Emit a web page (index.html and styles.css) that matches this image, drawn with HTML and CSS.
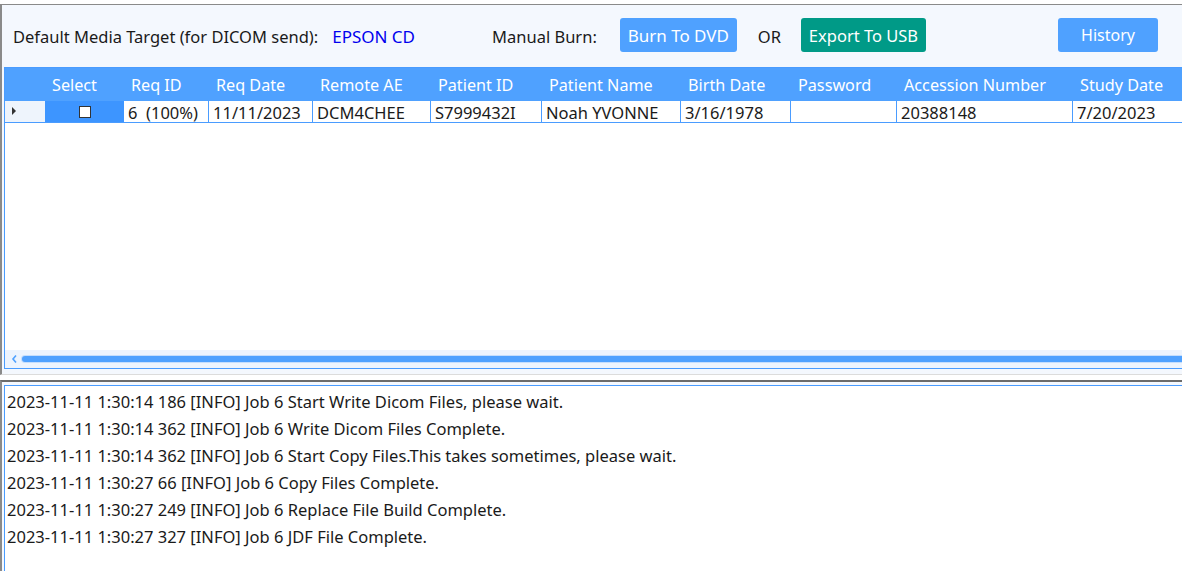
FILE: index.html
```html
<!doctype html>
<html>
<head>
	<meta charset="utf-8"/>
	<title>Media Burn</title>
	<link rel="stylesheet" href="styles.css">
</head>
<body>
	<div class="window">
		<div class="toolbar">
			<span class="label">Default Media Target (for DICOM send):</span>
			<span class="target">EPSON CD</span>
			<span class="label manual">Manual Burn:</span>
			<button class="btn" id="burn">Burn To DVD</button>
			<span class="label or">OR</span>
			<button class="btn green" id="usb">Export To USB</button>
			<button class="btn" id="history">History</button>
		</div>

		<div class="grid">
			<div class="row head">
				<div class="cell c0"></div>
				<div class="cell c1">Select</div>
				<div class="cell c2">Req ID</div>
				<div class="cell c3">Req Date</div>
				<div class="cell c4">Remote AE</div>
				<div class="cell c5">Patient ID</div>
				<div class="cell c6">Patient Name</div>
				<div class="cell c7">Birth Date</div>
				<div class="cell c8">Password</div>
				<div class="cell c9">Accession Number</div>
				<div class="cell c10">Study Date</div>
			</div>
			<div class="row data">
				<div class="cell c0"><span class="arrow"></span></div>
				<div class="cell c1"><span class="check"></span></div>
				<div class="cell c2">6&nbsp; (100%)</div>
				<div class="cell c3">11/11/2023</div>
				<div class="cell c4">DCM4CHEE</div>
				<div class="cell c5">S7999432I</div>
				<div class="cell c6">Noah YVONNE</div>
				<div class="cell c7">3/16/1978</div>
				<div class="cell c8"></div>
				<div class="cell c9">20388148</div>
				<div class="cell c10">7/20/2023</div>
			</div>
			<div class="empty"></div>
			<div class="scrollbar">
				<svg class="scroll-arrow" width="17" height="18" viewBox="0 0 17 18">
					<path d="M11 5.5 L8 9 L11 12.5" fill="none" stroke="#4fa1ff" stroke-width="1.6"/>
				</svg>
				<div class="thumb"></div>
			</div>
		</div>
	</div>

	<div class="logpanel">
		<div class="log">
			<div class="line">2023-11-11 1:30:14 186 [INFO] Job 6 Start Write Dicom Files, please wait.</div>
			<div class="line">2023-11-11 1:30:14 362 [INFO] Job 6 Write Dicom Files Complete.</div>
			<div class="line">2023-11-11 1:30:14 362 [INFO] Job 6 Start Copy Files.This takes sometimes, please wait.</div>
			<div class="line">2023-11-11 1:30:27 66 [INFO] Job 6 Copy Files Complete.</div>
			<div class="line">2023-11-11 1:30:27 249 [INFO] Job 6 Replace File Build Complete.</div>
			<div class="line">2023-11-11 1:30:27 327 [INFO] Job 6 JDF File Complete.</div>
		</div>
	</div>
</body>
</html>
```

FILE: styles.css
```css
html, body {
	margin: 0;
	padding: 0;
	background: white;
	overflow: hidden;
	font-family: "Noto Sans", "Open Sans", sans-serif;
	color: #1a1a1a;
}
.window {
	margin-top: 4px;
	border-top: 1px solid #8a8a8a;
	border-left: 2px solid #8a8a8a;
	border-bottom: 1px solid #dcdcdc;
	background: #f4f8fe;
	padding-bottom: 5px;
}
.toolbar {
	height: 62px;
	display: flex;
	align-items: center;
	padding-left: 11px;
	font-size: 16.5px;
	white-space: nowrap;
}
.target {
	color: #0000ee;
	margin-left: 14px;
	font-size: 17px;
}
.manual {
	margin-left: 77px;
}
.btn {
	font-family: inherit;
	font-size: 17px;
	height: 34px;
	border: none;
	border-radius: 3px;
	color: white;
	background-color: #4fa1ff;
	padding: 0;
	margin-top: -2px;
}
#burn {
	margin-left: 23px;
	width: 117px;
}
.or {
	margin-left: 21px;
}
#usb {
	margin-left: 20px;
	width: 125px;
	background-color: #009a87;
	font-size: 16.5px;
}
#history {
	margin-left: 132px;
	width: 100px;
	font-size: 16px;
}
.grid {
	margin-left: 2px;
	width: 1400px;
	border: 1px solid #4a9cff;
	border-right: none;
	background: white;
}
.row {
	display: flex;
	white-space: nowrap;
}
.head {
	height: 33px;
	background-color: #4fa1ff;
	color: white;
	font-size: 16.2px;
	align-items: center;
	padding-top: 1px;
	box-sizing: border-box;
}
.head .cell {
	padding-left: 7px;
}
.data {
	height: 21px;
	font-size: 16.5px;
	border-bottom: 1px solid #4a9cff;
}
.data .cell {
	padding-left: 4px;
	border-right: 1px solid #4a9cff;
	line-height: 23px;
}
.cell {
	box-sizing: border-box;
	flex: none;
}
.c0 { width: 40px; }
.c1 { width: 79px; }
.c2 { width: 85px; }
.c3 { width: 104px; }
.c4 { width: 118px; }
.c5 { width: 111px; }
.c6 { width: 139px; }
.c7 { width: 110px; }
.c8 { width: 106px; }
.c9 { width: 176px; }
.c10 { width: 130px; }

.data .c0 {
	background: #eef4fc;
	border-right: none;
	position: relative;
}
.arrow {
	position: absolute;
	left: 7px;
	top: 6px;
	border-left: 4px solid #333;
	border-top: 4px solid transparent;
	border-bottom: 4px solid transparent;
}
.data .c1 {
	background-color: #3d95ff;
	border-right: none;
	padding: 0;
	display: flex;
	justify-content: center;
	align-items: center;
}
.check {
	width: 10px;
	height: 10px;
	background: white;
	border: 1px solid #333;
}
.empty {
	height: 227px;
}
.scrollbar {
	height: 18px;
	background: #edf4fe;
	display: flex;
	align-items: center;
}
.scroll-arrow {
	flex: none;
}
.thumb {
	flex: 1;
	height: 6px;
	border-radius: 3px;
	background-color: #4fa1ff;
	box-shadow: 0 0 0 1px #c5defd;
}
.logpanel {
	margin-top: 5px;
	border-top: 2px solid #6b6b6b;
	border-left: 2px solid #8a8a8a;
	background: #f4f8fe;
	padding-top: 3px;
	height: 300px;
}
.log {
	margin-left: 2px;
	width: 1400px;
	height: 300px;
	border-top: 1px solid #4a9cff;
	border-left: 1px solid #4a9cff;
	background: white;
	padding-top: 2px;
	padding-left: 2px;
}
.line {
	font-size: 16.5px;
	height: 27px;
	line-height: 27px;
	white-space: nowrap;
}
```
